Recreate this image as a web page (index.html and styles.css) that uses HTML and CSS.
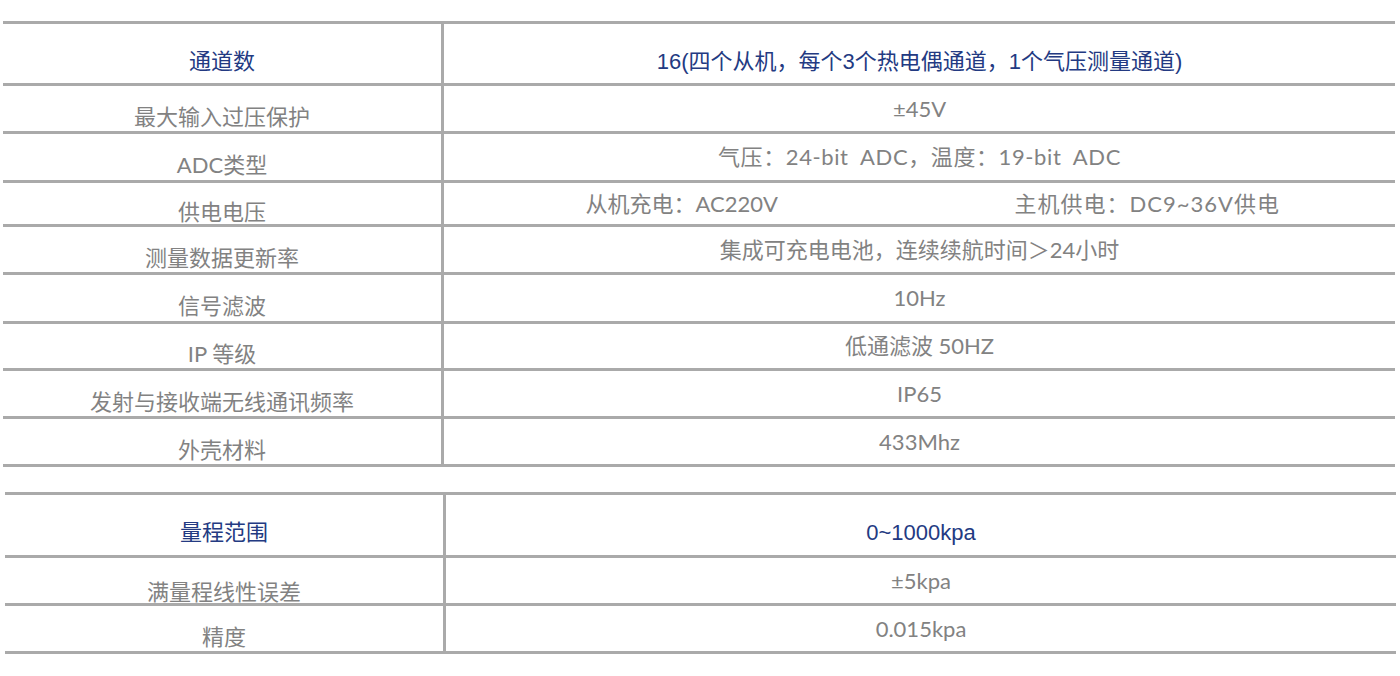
FILE: index.html
```html
<!DOCTYPE html>
<html lang="zh-CN">
<head>
<meta charset="utf-8">
<title>参数表</title>
<link rel="stylesheet" href="styles.css">
</head>
<body>
<div class="page">
  <div class="spec spec--main">
    <div class="row row--head">
      <div class="cell cell--label">通道数</div>
      <div class="cell cell--value">16(四个从机，每个3个热电偶通道，1个气压测量通道)</div>
    </div>
    <div class="row">
      <div class="cell cell--label">最大输入过压保护</div>
      <div class="cell cell--value">±45V</div>
    </div>
    <div class="row row--49">
      <div class="cell cell--label">ADC类型</div>
      <div class="cell cell--value cell--wide">气压：24-bit ADC，温度：19-bit ADC</div>
    </div>
    <div class="row row--44">
      <div class="cell cell--label">供电电压</div>
      <div class="cell cell--value cell--split">
        <span class="part">从机充电：AC220V</span>
        <span class="part part--wide">主机供电：DC9~36V供电</span>
      </div>
    </div>
    <div class="row">
      <div class="cell cell--label">测量数据更新率</div>
      <div class="cell cell--value">集成可充电电池，连续续航时间＞24小时</div>
    </div>
    <div class="row row--49">
      <div class="cell cell--label">信号滤波</div>
      <div class="cell cell--value">10Hz</div>
    </div>
    <div class="row row--47">
      <div class="cell cell--label">IP 等级</div>
      <div class="cell cell--value">低通滤波 50HZ</div>
    </div>
    <div class="row">
      <div class="cell cell--label">发射与接收端无线通讯频率</div>
      <div class="cell cell--value">IP65</div>
    </div>
    <div class="row">
      <div class="cell cell--label">外壳材料</div>
      <div class="cell cell--value">433Mhz</div>
    </div>
  </div>

  <div class="spec spec--range">
    <div class="row row--head row--head-lg">
      <div class="cell cell--label">量程范围</div>
      <div class="cell cell--value">0~1000kpa</div>
    </div>
    <div class="row">
      <div class="cell cell--label cell--low">满量程线性误差</div>
      <div class="cell cell--value">±5kpa</div>
    </div>
    <div class="row">
      <div class="cell cell--label">精度</div>
      <div class="cell cell--value">0.015kpa</div>
    </div>
  </div>
</div>
</body>
</html>
```

FILE: styles.css
```css
html, body {
  margin: 0;
  padding: 0;
  background: #ffffff;
}

.page {
  padding-top: 21px;
}

.spec {
  border-top: 3px solid #aaaaaa;
}

.spec--main {
  margin: 0 5px 0 3px;
}

.spec--range {
  margin: 25px 4px 0 5px;
}

.row {
  display: grid;
  grid-template-columns: 441px 1fr;
  box-sizing: border-box;
  height: 48px;
  border-bottom: 3px solid #aaaaaa;
}

.row--49 { height: 49px; }
.row--47 { height: 47px; }
.row--44 { height: 44px; }
.row--head { height: 62px; }
.row--head-lg { height: 63px; }

.cell {
  display: flex;
  align-items: center;
  justify-content: center;
  box-sizing: border-box;
  font-family: "Lato", "Noto Sans CJK SC", sans-serif;
  font-size: 22px;
  line-height: 24px;
  color: #828282;
  white-space: nowrap;
}

.cell--label {
  border-right: 3px solid #aaaaaa;
  padding-top: 16px;
}

.cell--low {
  padding-top: 22px;
}

.cell--value {
  padding-top: 0;
}

.cell--wide {
  word-spacing: 6px;
  letter-spacing: 0.6px;
}

.row--head .cell {
  color: #233a82;
  font-family: "Liberation Sans", "Noto Sans CJK SC", sans-serif;
  padding-top: 16px;
}

.cell--split {
  display: grid;
  grid-template-columns: 1fr 1fr;
  align-items: center;
  justify-items: center;
}

.part {
  display: block;
}

.part--wide {
  letter-spacing: 1px;
  margin-right: 20px;
}
```
